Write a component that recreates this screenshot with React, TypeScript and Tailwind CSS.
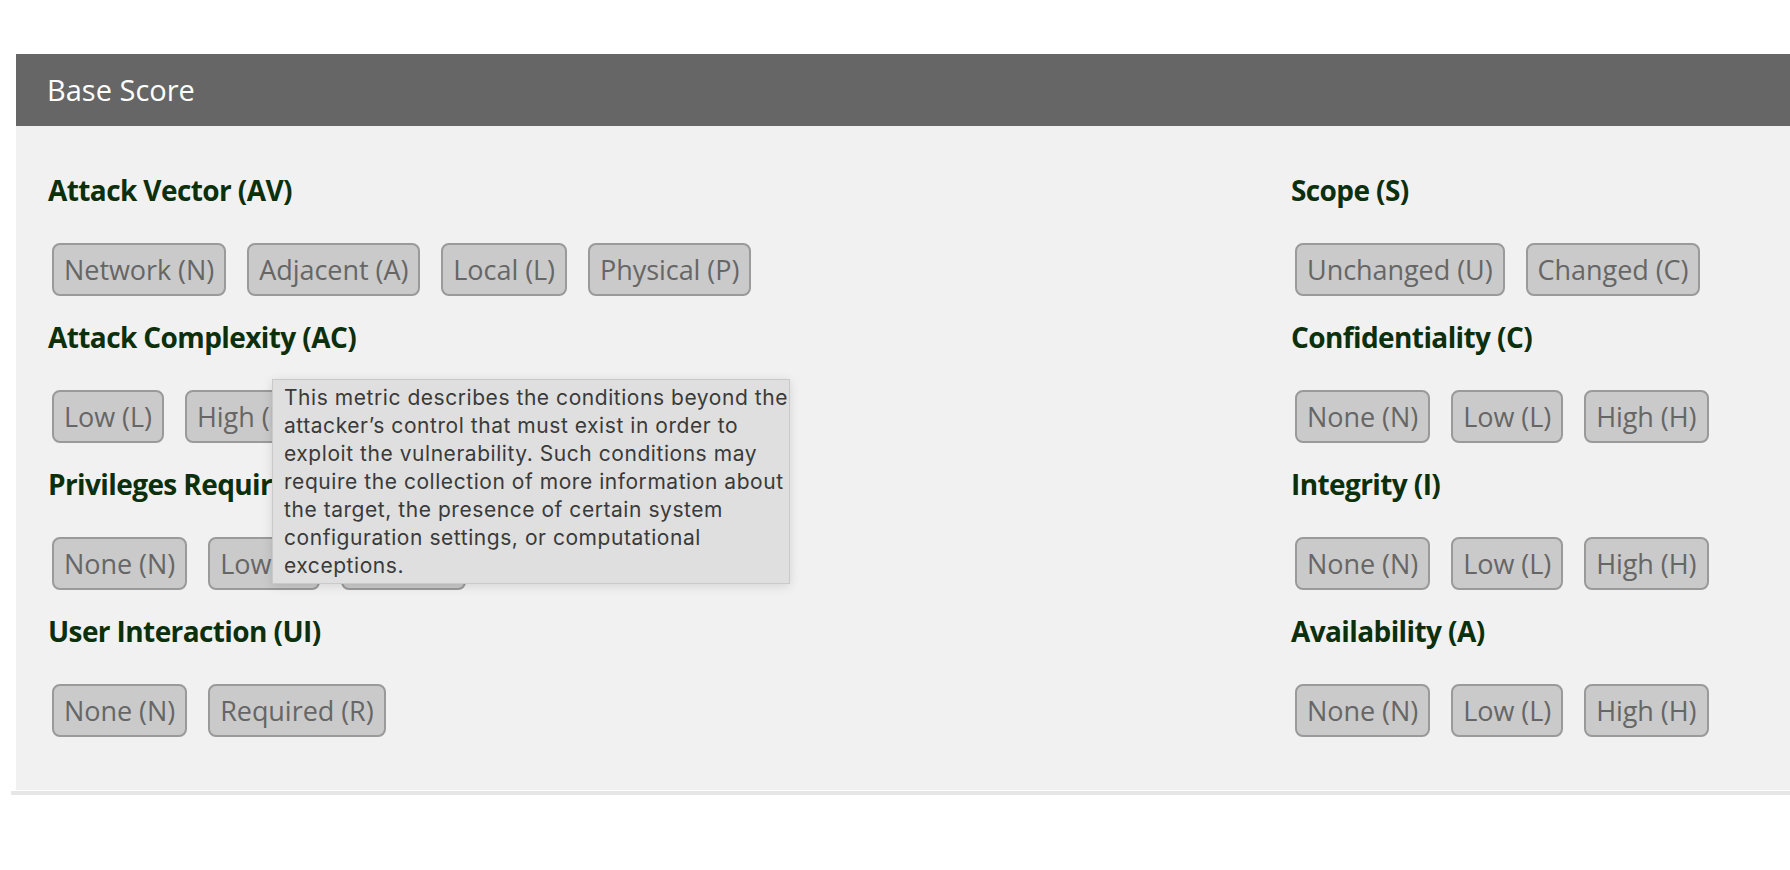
import React from "react";

type Metric = { title: string; options: string[] };

const leftMetrics: Metric[] = [
  { title: "Attack Vector (AV)", options: ["Network (N)", "Adjacent (A)", "Local (L)", "Physical (P)"] },
  { title: "Attack Complexity (AC)", options: ["Low (L)", "High (H)"] },
  { title: "Privileges Required (PR)", options: ["None (N)", "Low (L)", "High (H)"] },
  { title: "User Interaction (UI)", options: ["None (N)", "Required (R)"] },
];

const rightMetrics: Metric[] = [
  { title: "Scope (S)", options: ["Unchanged (U)", "Changed (C)"] },
  { title: "Confidentiality (C)", options: ["None (N)", "Low (L)", "High (H)"] },
  { title: "Integrity (I)", options: ["None (N)", "Low (L)", "High (H)"] },
  { title: "Availability (A)", options: ["None (N)", "Low (L)", "High (H)"] },
];

const tooltipLines = [
  "This metric describes the conditions beyond the",
  "attacker\u2019s control that must exist in order to",
  "exploit the vulnerability. Such conditions may",
  "require the collection of more information about",
  "the target, the presence of certain system",
  "configuration settings, or computational",
  "exceptions.",
];

function MetricGroup({ metric }: { metric: Metric }) {
  return (
    <div className="flex flex-col">
      <h3 className="text-[28px] leading-[38px] font-bold tracking-[-0.6px] text-[#0c2f0c]">
        {metric.title}
      </h3>
      <div className="mt-[34px] ml-[4px] flex gap-[21px]">
        {metric.options.map((opt) => (
          <button
            key={opt}
            className="flex h-[53px] items-center rounded-[8px] border-2 border-[#9a9a9a] bg-[#cacaca] px-[10px] pt-[2px] text-[27px] tracking-[-0.05px] text-[#666666]"
          >
            {opt}
          </button>
        ))}
      </div>
    </div>
  );
}

export default function App() {
  return (
    <div className="min-h-screen bg-white pt-[54px] font-['Open_Sans',sans-serif]">
      <div className="ml-[16px]">
        <div className="flex h-[72px] items-center bg-[#666666] pl-[31px] text-[29px] text-white">
          Base Score
        </div>
        <div className="relative grid grid-cols-[1243px_1fr] bg-[#f1f1f1] pt-[45px] pb-[53px] pl-[32px]">
          <div className="flex flex-col gap-[22px]">
            {leftMetrics.map((m) => (
              <MetricGroup key={m.title} metric={m} />
            ))}
          </div>
          <div className="flex flex-col gap-[22px]">
            {rightMetrics.map((m) => (
              <MetricGroup key={m.title} metric={m} />
            ))}
          </div>

          <div className="absolute top-[253px] left-[256px] w-[518px] border border-[#c9c9c9] bg-[#dfdfdf] pt-[4px] pb-[3px] pl-[11px] font-['Inter',sans-serif] text-[21px] leading-[28px] tracking-[0.55px] text-[#3a3a3a] shadow-[0_2px_10px_rgba(0,0,0,0.12)]">
            {tooltipLines.map((line) => (
              <div key={line} className="whitespace-nowrap">
                {line}
              </div>
            ))}
          </div>
        </div>
      </div>
      <div className="ml-[11px] h-[5px] border-t border-white bg-[#e6e6e6]" />
    </div>
  );
}
